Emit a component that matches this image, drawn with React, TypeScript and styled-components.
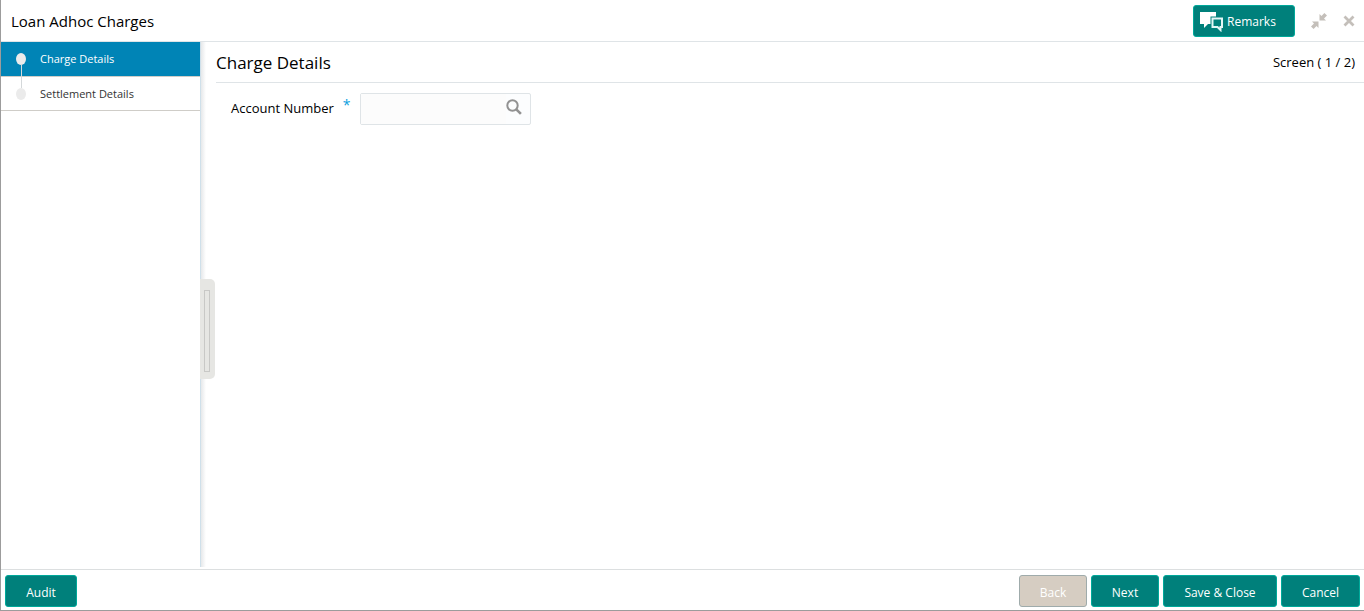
import React from 'react';
import styled, { createGlobalStyle, css } from 'styled-components';

const GlobalStyle = createGlobalStyle`
  *, *::before, *::after { box-sizing: border-box; }
  body {
    margin: 0;
    background: #fff;
    color: #000;
    font-family: 'Segoe UI', 'Open Sans', 'Noto Sans', sans-serif;
    font-size: 13px;
  }
  button, input { font: inherit; }
  h1, h2, ol { margin: 0; padding: 0; }
`;

const Window = styled.div`
  display: flex;
  flex-direction: column;
  min-height: 100vh;
  border-left: 1px solid #9c9c9c;
  border-bottom: 1px solid #9c9c9c;
`;

const Header = styled.header`
  display: flex;
  align-items: center;
  height: 42px;
  padding: 0 9px 0 10px;
  border-bottom: 1px solid #dfe4e7;
`;

const Title = styled.h1`
  flex: 1;
  font-size: 15px;
  font-weight: 400;
  line-height: 20px;
`;

const Button = styled.button<{ $width: number }>`
  display: inline-flex;
  align-items: center;
  justify-content: center;
  gap: 3px;
  width: ${({ $width }) => $width}px;
  height: 32px;
  padding: 4px 0 0;
  border: 1px solid #00a99a;
  border-radius: 3px;
  background: #00807b;
  color: #fff;
  font-size: 12px;
  line-height: 16px;
  white-space: nowrap;
  cursor: pointer;

  &:disabled {
    border-color: #9fabab;
    background: #d6cdc2;
    cursor: default;
  }
`;

const RemarksButton = styled(Button)`
  justify-content: flex-start;
  padding: 2px 0 0 6px;
`;

const IconButton = styled.button<{ $before: number }>`
  display: flex;
  margin-left: ${({ $before }) => $before}px;
  padding: 0;
  border: 0;
  background: none;
  color: #c4bfba;
  cursor: pointer;
`;

const Body = styled.div`
  display: flex;
  flex: 1;
`;

const Sidebar = styled.nav`
  flex: none;
  width: 199px;
`;

const Steps = styled.ol`
  list-style: none;
`;

const Step = styled.li`
  border-bottom: 1px solid #cfcdc8;
`;

const StepLink = styled.a<{ $active?: boolean }>`
  display: flex;
  align-items: center;
  gap: 14px;
  height: ${({ $active }) => ($active ? 34 : 33)}px;
  padding-left: 15px;
  color: #333;
  font-size: 11px;
  line-height: 16px;
  text-decoration: none;
  ${({ $active }) => $active && css`
    background: #0084b6;
    color: #fff;
  `}
`;

const Dot = styled.span<{ $joined?: boolean }>`
  position: relative;
  width: 10px;
  height: 12px;
  border-radius: 50%;
  background: #ebebeb;
  ${({ $joined }) => $joined && css`
    &::after {
      content: '';
      position: absolute;
      top: 11px;
      left: 5px;
      width: 1px;
      height: 24px;
      background: #d4d8da;
    }
  `}
`;

const Divider = styled.div`
  display: flex;
  align-items: center;
  flex: none;
  width: 15px;
  margin-bottom: 2px;
  background: linear-gradient(to right, #cfe0ea 1px, #e6e8ea 1px, #fff 6px) no-repeat;
`;

const Handle = styled.button`
  display: flex;
  align-items: center;
  justify-content: center;
  width: 15px;
  height: 100px;
  margin-top: 49px;
  padding: 4px 1px 0 0;
  border: 0;
  border-radius: 0 5px 5px 0;
  background: #e6e6e3;
  cursor: pointer;
`;

const Grip = styled.span`
  width: 6px;
  height: 82px;
  border: 1px solid #c8c8c6;
`;

const Main = styled.main`
  flex: 1;
  padding-left: 1px;
`;

const SectionHeader = styled.div`
  display: flex;
  align-items: center;
  justify-content: space-between;
  height: 41px;
  padding-right: 9px;
  border-bottom: 1px solid #dfe4e7;
`;

const SectionTitle = styled.h2`
  padding-top: 2px;
  font-size: 17px;
  font-weight: 400;
  line-height: 24px;
`;

const ScreenCount = styled.span`
  font-size: 13px;
  line-height: 16px;
`;

const Field = styled.div`
  display: flex;
  align-items: center;
  padding: 10px 15px;
`;

const Label = styled.label`
  display: flex;
  gap: 9px;
  width: 129px;
  padding-bottom: 2px;
  font-size: 13px;
  line-height: 20px;
`;

const Required = styled.span`
  color: #0aa0e0;
  font-size: 14px;
  line-height: 14px;
`;

const LookupBox = styled.div`
  display: flex;
  align-items: center;
  width: 171px;
  height: 32px;
  padding-right: 8px;
  border: 1px solid #dfe4e7;
  border-radius: 2px;
  background: #fcfdfe;
`;

const LookupInput = styled.input`
  flex: 1;
  min-width: 0;
  height: 30px;
  padding: 0 8px;
  border: 0;
  outline: 0;
  background: #fcfcfc;
`;

const LookupButton = styled.button`
  display: flex;
  padding: 0 0 4px;
  border: 0;
  background: none;
  cursor: pointer;
`;

const Footer = styled.footer`
  display: flex;
  align-items: center;
  justify-content: space-between;
  height: 41px;
  padding: 2px 4px 0;
  border-top: 1px solid #dcdfe0;
`;

const Actions = styled.div`
  display: flex;
  gap: 4px;
`;

const RemarksIcon = () => (
  <svg width="24" height="20" viewBox="0 0 24 20" aria-hidden="true">
    <path d="M0 0h16v4.5h-5.5V12H8l-4 4v-4H0z" fill="#fff" />
    <path d="M12.5 6.5h9.5v8.5h-1.5v3l-3-3h-5z" fill="none" stroke="#e2f6f6" strokeWidth="2" />
  </svg>
);

const CollapseIcon = () => (
  <svg width="16" height="16" viewBox="0 0 16 16" fill="currentColor" aria-hidden="true">
    <path d="M8.5 1v6.5H15l-2-2L16 2.6 13.4 0l-2.9 3z" />
    <path d="M7.5 15V8.5H1l2 2-3 2.9L2.6 16l2.9-3z" />
  </svg>
);

const CloseIcon = () => (
  <svg width="12" height="12" viewBox="0 0 12 12" aria-hidden="true">
    <path d="M1.5 1.5l9 9M10.5 1.5l-9 9" stroke="currentColor" strokeWidth="2.8" />
  </svg>
);

const SearchIcon = () => (
  <svg width="16" height="16" viewBox="0 0 16 16" fill="none" stroke="#929292" aria-hidden="true">
    <circle cx="6.5" cy="6.5" r="5.2" strokeWidth="2" />
    <path d="M10.3 10.3l4.6 4.6" strokeWidth="2.6" />
  </svg>
);

export default function App() {
  return (
    <>
      <GlobalStyle />
      <Window>
        <Header>
          <Title>Loan Adhoc Charges</Title>
          <RemarksButton type="button" $width={102}><RemarksIcon />Remarks</RemarksButton>
          <IconButton type="button" aria-label="Collapse" $before={16}><CollapseIcon /></IconButton>
          <IconButton type="button" aria-label="Close" $before={16}><CloseIcon /></IconButton>
        </Header>
        <Body>
          <Sidebar aria-label="Steps">
            <Steps>
              <Step><StepLink href="#charge" $active aria-current="step"><Dot $joined />Charge Details</StepLink></Step>
              <Step><StepLink href="#settlement"><Dot />Settlement Details</StepLink></Step>
            </Steps>
          </Sidebar>
          <Divider>
            <Handle type="button" aria-label="Toggle steps"><Grip /></Handle>
          </Divider>
          <Main>
            <SectionHeader>
              <SectionTitle>Charge Details</SectionTitle>
              <ScreenCount>Screen ( 1 / 2)</ScreenCount>
            </SectionHeader>
            <Field>
              <Label htmlFor="account">Account Number <Required>*</Required></Label>
              <LookupBox>
                <LookupInput id="account" type="text" required />
                <LookupButton type="button" aria-label="Search accounts"><SearchIcon /></LookupButton>
              </LookupBox>
            </Field>
          </Main>
        </Body>
        <Footer>
          <Button type="button" $width={72}>Audit</Button>
          <Actions>
            <Button type="button" $width={68} disabled>Back</Button>
            <Button type="button" $width={68}>Next</Button>
            <Button type="button" $width={114}>Save &amp; Close</Button>
            <Button type="button" $width={79}>Cancel</Button>
          </Actions>
        </Footer>
      </Window>
    </>
  );
}
